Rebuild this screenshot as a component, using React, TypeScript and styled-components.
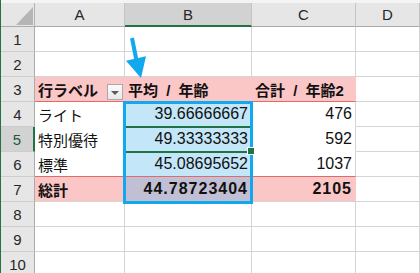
import React from "react";
import styled, { createGlobalStyle } from "styled-components";

const GRID = "#d4d4d4";
const PINK = "#fbc6c6";
const RED = "#e46a6a";
const GREEN = "#217346";
const SKY = "#12a8ee";
const SKY_FILL = "#c3e6f8";
const MIX = "#c1bfd4";

const GlobalStyle = createGlobalStyle`
  html, body { margin: 0; padding: 0; background: #fff; }
  body { font-family: "Liberation Sans", "Noto Sans CJK JP", sans-serif; }
  * { box-sizing: border-box; }
`;

const Sheet = styled.div`
  position: relative;
  width: 420px;
  height: 273px;
  overflow: hidden;
  background: #fff;
  border-left: 1px solid ${GREEN};
`;

const TopStrip = styled.div`
  height: 3px;
  background: #f4f4f4;
`;

const Grid = styled.div`
  display: grid;
  grid-template-columns: 34px 90px 127px 104px 64px;
  grid-template-rows: 24px repeat(10, 25px);
`;

const Corner = styled.div`
  display: flex;
  align-items: flex-end;
  justify-content: flex-end;
  padding: 0 1px 1px 0;
  background: #e6e6e6;
  border-right: 1px solid #b4b4b4;
  border-bottom: 1px solid #ababab;
  &::after {
    content: "";
    width: 17px;
    height: 18px;
    background: #b5b5b5;
    clip-path: polygon(100% 0, 100% 100%, 0 100%);
  }
`;

const ColHead = styled.div<{ $active?: boolean }>`
  display: flex;
  align-items: center;
  justify-content: center;
  background: ${(p) => (p.$active ? "#d2d2d2" : "#e6e6e6")};
  border-right: 1px solid #c4c4c4;
  border-bottom: ${(p) => (p.$active ? `2px solid ${GREEN}` : "1px solid #ababab")};
  font-size: 15px;
  color: #262626;
`;

const RowHead = styled.div<{ $active?: boolean }>`
  display: flex;
  align-items: center;
  justify-content: center;
  background: ${(p) => (p.$active ? "#d2d2d2" : "#e6e6e6")};
  border-right: ${(p) => (p.$active ? `2px solid ${GREEN}` : "1px solid #ababab")};
  border-bottom: 1px solid #cdcdcd;
  font-size: 15px;
  color: ${(p) => (p.$active ? "#1d5a3b" : "#262626")};
`;

const Cell = styled.div<{
  $bg: string;
  $rb: string;
  $bb: string;
  $align?: "left" | "right";
  $bold?: boolean;
  $active?: boolean;
}>`
  position: relative;
  display: flex;
  align-items: center;
  justify-content: ${(p) => (p.$align === "right" ? "flex-end" : "flex-start")};
  padding: 0 3px;
  background: ${(p) => p.$bg};
  border-right: 1px solid ${(p) => p.$rb};
  border-bottom: 1px solid ${(p) => p.$bb};
  font-size: 15px;
  font-weight: ${(p) => (p.$bold ? 700 : 400)};
  color: #111;
  white-space: nowrap;

  ${(p) =>
    p.$active &&
    `
    &::after {
      content: "";
      position: absolute;
      top: -1px;
      bottom: -2px;
      left: -1px;
      right: -1px;
      border-top: 2px solid ${GREEN};
      border-bottom: 2px solid ${GREEN};
      z-index: 1;
    }
    &::before {
      content: "";
      position: absolute;
      right: -4px;
      bottom: -4px;
      width: 6px;
      height: 6px;
      background: ${GREEN};
      border: 1px solid #fff;
      z-index: 3;
    }
  `}
`;

// pivot captions have the wide spaces of the original sheet font
const Caption = styled.span`
  word-spacing: 4px;
`;

const Num = styled.span<{ $bold?: boolean }>`
  font-family: "Liberation Sans", sans-serif;
  font-size: 16px;
  letter-spacing: ${(p) => (p.$bold ? "1px" : "0")};
`;

const FilterButton = styled.span`
  align-self: flex-end;
  display: flex;
  align-items: center;
  justify-content: center;
  width: 16px;
  height: 16px;
  margin: 0 -2px 1px auto;
  padding-top: 2px;
  border: 1px solid #a9a9a9;
  background: linear-gradient(#fbfbfb, #e8e8e8);
  &::after {
    content: "";
    border-left: 4px solid transparent;
    border-right: 4px solid transparent;
    border-top: 4px solid #595959;
  }
`;

const Callout = styled.div`
  position: absolute;
  left: 122px;
  top: 101px;
  width: 130px;
  height: 103px;
  border: 3px solid ${SKY};
  z-index: 2;
  pointer-events: none;
`;

const Arrow = styled.svg`
  position: absolute;
  left: 119px;
  top: 32px;
  width: 32px;
  height: 50px;
  z-index: 2;
`;

type Kind = "head" | "body" | "total";

const pivot: Record<number, { kind: Kind; cells: [string, string, string] }> = {
  3: { kind: "head", cells: ["行ラベル", "平均 / 年齢", "合計 / 年齢2"] },
  4: { kind: "body", cells: ["ライト", "39.66666667", "476"] },
  5: { kind: "body", cells: ["特別優待", "49.33333333", "592"] },
  6: { kind: "body", cells: ["標準", "45.08695652", "1037"] },
  7: { kind: "total", cells: ["総計", "44.78723404", "2105"] },
};

const columns = ["A", "B", "C", "D"];
const rows = [1, 2, 3, 4, 5, 6, 7, 8, 9, 10];

function look(row: number, col: number) {
  const p = pivot[row];
  if (!p || col === 3) return { bg: "#fff", rb: GRID, bb: GRID };
  if (p.kind === "head") return { bg: PINK, rb: PINK, bb: RED };
  if (p.kind === "total") {
    const bg = col === 1 ? MIX : PINK;
    return { bg, rb: bg, bb: GRID };
  }
  const bottom = row === 6 ? RED : undefined;
  if (col === 1) return { bg: SKY_FILL, rb: SKY_FILL, bb: bottom || SKY_FILL };
  return { bg: "#fff", rb: col === 2 ? GRID : "#fff", bb: bottom || "#fff" };
}

function renderCell(row: number, col: number) {
  const p = pivot[row];
  const { bg, rb, bb } = look(row, col);
  const key = `${row}-${col}`;
  const active = row === 5 && col === 1;
  if (!p || col === 3) return <Cell key={key} $bg={bg} $rb={rb} $bb={bb} />;

  const text = p.cells[col];
  const bold = p.kind !== "body";

  if (p.kind === "head") {
    return (
      <Cell key={key} $bg={bg} $rb={rb} $bb={bb} $bold>
        <Caption>{text}</Caption>
        {col === 0 && <FilterButton />}
      </Cell>
    );
  }
  if (col === 0) {
    return (
      <Cell key={key} $bg={bg} $rb={rb} $bb={bb} $bold={bold}>
        {text}
      </Cell>
    );
  }
  return (
    <Cell key={key} $bg={bg} $rb={rb} $bb={bb} $bold={bold} $align="right" $active={active}>
      <Num $bold={bold}>{text}</Num>
    </Cell>
  );
}

export default function App() {
  return (
    <>
      <GlobalStyle />
      <Sheet>
        <TopStrip />
        <Grid>
          <Corner />
          {columns.map((c) => (
            <ColHead key={c} $active={c === "B"}>
              {c}
            </ColHead>
          ))}
          {rows.map((r) => (
            <React.Fragment key={r}>
              <RowHead $active={r === 5}>{r}</RowHead>
              {columns.map((_, i) => renderCell(r, i))}
            </React.Fragment>
          ))}
        </Grid>
        <Callout />
        <Arrow viewBox="0 0 32 50">
          <line x1="12" y1="6" x2="16.2" y2="27" stroke={SKY} strokeWidth="4" />
          <polygon points="6,28.7 26,24.2 21,46" fill={SKY} />
        </Arrow>
      </Sheet>
    </>
  );
}
